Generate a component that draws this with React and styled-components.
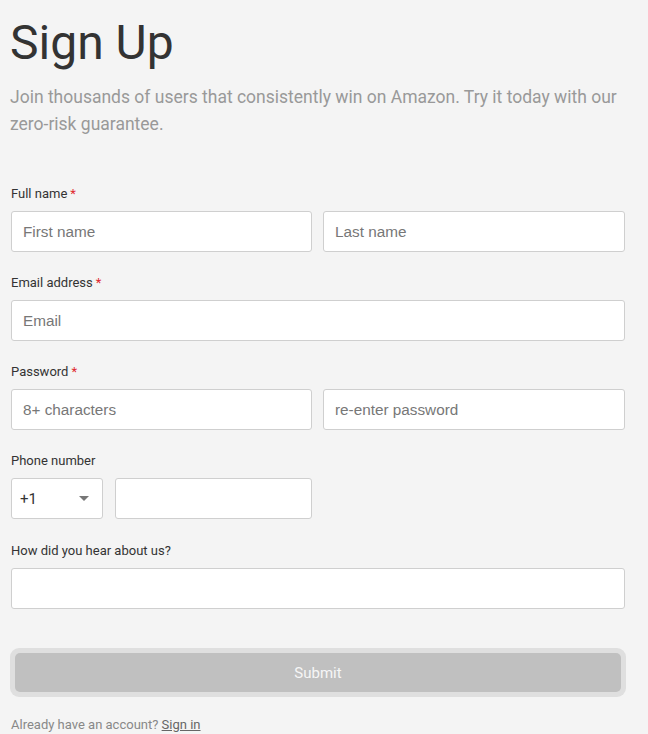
import React from "react";
import styled, { createGlobalStyle } from "styled-components";

const Global = createGlobalStyle`
  html, body { margin: 0; padding: 0; background: #f4f4f4; }
  body { font-family: Roboto, "Noto Sans", sans-serif; color: #333; }
  * { box-sizing: border-box; }
`;

const Page = styled.div`
  width: 648px;
  min-height: 734px;
  background: #f4f4f4;
  padding: 14px 0 0 11px;
`;

const Form = styled.form`
  width: 614px;
  display: flex;
  flex-direction: column;
`;

const Title = styled.h1`
  margin: 0 0 0 -1px;
  font-family: Roboto, sans-serif;
  font-weight: 400;
  font-size: 48px;
  line-height: 58px;
  color: #333;
`;

const Lead = styled.p`
  margin: 12px 0 48px -1px;
  font-size: 17.5px;
  line-height: 27px;
  color: #999;
`;

const Group = styled.div`
  display: flex;
  flex-direction: column;
  margin-bottom: ${(p) => p.$gapAfter || "23px"};
`;

const Label = styled.label`
  font-size: 13px;
  line-height: 16px;
  color: #333;
  margin-bottom: 9px;
`;

const Req = styled.span`
  color: #e0282e;
  margin-left: 3px;
`;

const Row = styled.div`
  display: grid;
  grid-template-columns: ${(p) => p.$cols || "301px 302px"};
  gap: ${(p) => p.$gap || "11px"};
`;

const Input = styled.input`
  height: 41px;
  width: 100%;
  border: 1px solid #cfcfcf;
  border-radius: 3px;
  background: #fff;
  padding: 0 11px;
  font-family: "Liberation Sans", Arial, sans-serif;
  font-size: 15.3px;
  color: #333;
  outline: none;
  &::placeholder { color: #777; }
`;

const Select = styled.div`
  height: 41px;
  border: 1px solid #cfcfcf;
  border-radius: 3px;
  background: #fff;
  display: flex;
  align-items: center;
  justify-content: space-between;
  padding: 0 13px 0 8px;
  font-size: 15px;
  color: #333;
`;

const Caret = styled.span`
  width: 0;
  height: 0;
  border-left: 5px solid transparent;
  border-right: 5px solid transparent;
  border-top: 5px solid #777;
`;

const SubmitFrame = styled.div`
  margin: 16px 0 0 -1px;
  width: 616px;
  padding: 5px;
  background: #dfdfdf;
  border-radius: 9px;
`;

const Submit = styled.button`
  width: 100%;
  height: 39px;
  border: none;
  border-radius: 5px;
  background: #c0c0c0;
  color: #f6f6f6;
  font-family: Roboto, sans-serif;
  font-size: 15px;
  cursor: not-allowed;
`;

const Footer = styled.p`
  margin: 20px 0 0 0;
  font-size: 13px;
  line-height: 16px;
  color: #888;
`;

const SignIn = styled.a`
  color: #666;
  text-decoration: underline;
`;

export default function App() {
  return (
    <Page>
      <Global />
      <Form onSubmit={(e) => e.preventDefault()}>
        <Title>Sign Up</Title>
        <Lead>
          Join thousands of users that consistently win on Amazon. Try it today with our zero-risk guarantee.
        </Lead>

        <Group>
          <Label>Full name<Req>*</Req></Label>
          <Row>
            <Input placeholder="First name" />
            <Input placeholder="Last name" />
          </Row>
        </Group>

        <Group>
          <Label>Email address<Req>*</Req></Label>
          <Input placeholder="Email" />
        </Group>

        <Group>
          <Label>Password<Req>*</Req></Label>
          <Row>
            <Input type="text" placeholder="8+ characters" />
            <Input type="text" placeholder="re-enter password" />
          </Row>
        </Group>

        <Group $gapAfter="24px">
          <Label>Phone number</Label>
          <Row $cols="92px 197px" $gap="12px">
            <Select>+1<Caret /></Select>
            <Input />
          </Row>
        </Group>

        <Group>
          <Label>How did you hear about us?</Label>
          <Input />
        </Group>

        <SubmitFrame>
          <Submit type="submit" disabled>Submit</Submit>
        </SubmitFrame>

        <Footer>
          Already have an account? <SignIn href="#">Sign in</SignIn>
        </Footer>
      </Form>
    </Page>
  );
}
